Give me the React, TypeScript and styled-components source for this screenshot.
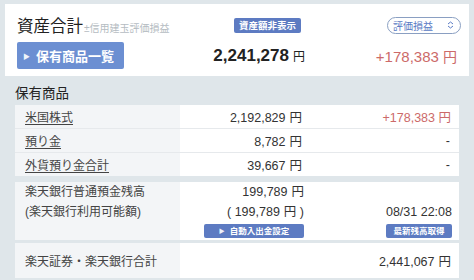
import React from "react";
import styled, { createGlobalStyle } from "styled-components";

const GlobalStyle = createGlobalStyle`
  html, body {
    margin: 0;
    padding: 0;
    background: #dfe6ea;
  }
  body {
    font-family: "Liberation Sans", "Noto Sans CJK JP", sans-serif;
    color: #333;
  }
`;

const Page = styled.div`
  width: 474px;
  height: 280px;
  overflow: hidden;
  padding: 4px 5px 0 5px;
  box-sizing: border-box;
  background: #dfe6ea;
`;

const TopCard = styled.div`
  background: #fff;
  height: 72px;
  box-sizing: border-box;
  padding: 10px 8px 0 12px;
  display: grid;
  grid-template-columns: 186px 100px 1fr;
  grid-template-rows: 22px 31px;
  row-gap: 4px;
  align-items: center;
`;

const Title = styled.div`
  display: flex;
  align-items: baseline;
  font-size: 16.5px;
  color: #222;
  white-space: nowrap;
`;

const Note = styled.span`
  font-size: 10px;
  color: #b5bcc2;
  margin-left: 1px;
`;

const Badge = styled.span`
  justify-self: end;
  margin-right: 2px;
  background: #5d7bc2;
  color: #fff;
  font-size: 9.5px;
  font-weight: bold;
  padding: 1px 5px;
  border-radius: 2px;
  line-height: 13px;
`;

const Select = styled.div`
  justify-self: end;
  width: 74px;
  height: 17px;
  box-sizing: border-box;
  border: 1px solid #8a9fc2;
  border-radius: 9px;
  display: flex;
  align-items: center;
  justify-content: space-between;
  padding: 0 6px 0 5px;
  color: #5a7bc4;
  font-size: 10px;
`;

const ListButton = styled.div`
  width: 107px;
  height: 27px;
  background: #6c8fd2;
  border-radius: 2px;
  color: #fff;
  font-size: 13px;
  font-weight: bold;
  display: flex;
  align-items: center;
  padding-left: 6px;
  box-sizing: border-box;
  gap: 6px;
`;

const Arrow = styled.span<{ $size?: number }>`
  font-size: ${(p) => p.$size ?? 7}px;
  opacity: 0.9;
`;

const Amount = styled.div`
  justify-self: end;
  margin-right: -2px;
  font-size: 17px;
  font-weight: bold;
  color: #222;
  white-space: nowrap;
`;

const Yen = styled.span`
  font-size: 12px;
  font-weight: normal;
  margin-left: 4px;
`;

const Profit = styled.div<{ $size?: number }>`
  justify-self: end;
  margin-right: 4px;
  color: #cc6a69;
  font-size: ${(p) => p.$size ?? 15}px;
  white-space: nowrap;
`;

const Section = styled.div`
  padding: 8px 10px 0 10px;
`;

const SectionTitle = styled.div`
  font-size: 13.5px;
  color: #222;
  height: 19px;
  line-height: 19px;
  margin-bottom: 2px;
`;

const Table = styled.div`
  background: #fff;
  margin-bottom: 6px;
`;

const Row = styled.div<{ $h?: number }>`
  display: grid;
  grid-template-columns: 165px 130px 1fr;
  height: ${(p) => p.$h ?? 23}px;
  & + & {
    border-top: 1px solid #e6e9ec;
  }
`;

const LabelCell = styled.div`
  background: #f3f5f7;
  padding-left: 10px;
  font-size: 12px;
  display: flex;
  flex-direction: column;
  justify-content: center;
  color: #444;
`;

const LinkLabel = styled.span`
  text-decoration: underline;
  text-underline-offset: 2px;
  color: #444;
`;

const ValueCell = styled.div`
  display: flex;
  flex-direction: column;
  align-items: flex-end;
  justify-content: center;
  padding-right: 8px;
  font-size: 12.5px;
  color: #333;
  white-space: nowrap;
`;

const SmallYen = styled.span`
  margin-left: 4px;
`;

const Dash = styled.span`
  margin-right: 1px;
`;

const Block = styled.div<{ $h: number }>`
  background: #fff;
  height: ${(p) => p.$h}px;
  margin-bottom: 3px;
  display: grid;
  grid-template-columns: 165px 130px 1fr;
`;

const BankLabel = styled.div`
  background: #f3f5f7;
  padding: 0 0 0 10px;
  font-size: 12px;
  line-height: 20px;
  color: #444;
`;

const BankValues = styled.div`
  display: flex;
  flex-direction: column;
  align-items: flex-end;
  padding: 0 6px 0 0;
  font-size: 12.5px;
  line-height: 20px;
  white-space: nowrap;
`;

const SmallButton = styled.div<{ $w: number }>`
  width: ${(p) => p.$w}px;
  height: 14px;
  margin-top: 2px;
  background: #5d7bc2;
  border-radius: 2px;
  color: #fff;
  font-size: 8.5px;
  font-weight: bold;
  display: flex;
  align-items: center;
  justify-content: center;
  gap: 5px;
  line-height: 14px;
`;

const DateCol = styled.div`
  display: flex;
  flex-direction: column;
  align-items: flex-end;
  padding: 20px 7px 0 0;
  font-size: 12.5px;
  line-height: 20px;
`;

const TotalLabel = styled.div`
  background: #f3f5f7;
  padding-left: 10px;
  font-size: 12px;
  display: flex;
  align-items: center;
  color: #444;
  white-space: nowrap;
`;

const SortIcon = () => (
  <svg width="7" height="8" viewBox="0 0 7 8">
    <path d="M1 3 L3.5 1 L6 3 M1 5 L3.5 7 L6 5" fill="none" stroke="#5a7bc4" strokeWidth="1" />
  </svg>
);

const App = () => {
  return (
    <>
      <GlobalStyle />
      <Page>
        <TopCard>
          <Title>
            資産合計<Note>±信用建玉評価損益</Note>
          </Title>
          <Badge>資産額非表示</Badge>
          <Select>
            <span>評価損益</span>
            <SortIcon />
          </Select>
          <ListButton>
            <Arrow>▶</Arrow>保有商品一覧
          </ListButton>
          <Amount>
            2,241,278<Yen>円</Yen>
          </Amount>
          <Profit>
            +178,383 <span style={{ fontSize: 14 }}>円</span>
          </Profit>
        </TopCard>
        <Section>
          <SectionTitle>保有商品</SectionTitle>
          <Table>
            <Row>
              <LabelCell>
                <div><LinkLabel>米国株式</LinkLabel></div>
              </LabelCell>
              <ValueCell>
                <span>2,192,829<SmallYen>円</SmallYen></span>
              </ValueCell>
              <ValueCell>
                <Profit $size={12.5} style={{ marginRight: 0 }}>+178,383 円</Profit>
              </ValueCell>
            </Row>
            <Row>
              <LabelCell>
                <div><LinkLabel>預り金</LinkLabel></div>
              </LabelCell>
              <ValueCell>
                <span>8,782<SmallYen>円</SmallYen></span>
              </ValueCell>
              <ValueCell>
                <Dash>-</Dash>
              </ValueCell>
            </Row>
            <Row>
              <LabelCell>
                <div><LinkLabel>外貨預り金合計</LinkLabel></div>
              </LabelCell>
              <ValueCell>
                <span>39,667<SmallYen>円</SmallYen></span>
              </ValueCell>
              <ValueCell>
                <Dash>-</Dash>
              </ValueCell>
            </Row>
          </Table>
          <Block $h={58}>
            <BankLabel>
              楽天銀行普通預金残高
              <br />
              (楽天銀行利用可能額)
            </BankLabel>
            <BankValues>
              <span>199,789<SmallYen>円</SmallYen></span>
              <span>( 199,789<SmallYen>円 )</SmallYen></span>
              <SmallButton $w={100}>
                <Arrow $size={6}>▶</Arrow>自動入出金設定
              </SmallButton>
            </BankValues>
            <DateCol>
              <span>08/31 22:08</span>
              <SmallButton $w={66}>最新残高取得</SmallButton>
            </DateCol>
          </Block>
          <Block $h={35}>
            <TotalLabel>楽天証券・楽天銀行合計</TotalLabel>
            <div />
            <ValueCell>
              <span>2,441,067<SmallYen>円</SmallYen></span>
            </ValueCell>
          </Block>
        </Section>
      </Page>
    </>
  );
};

export default App;
